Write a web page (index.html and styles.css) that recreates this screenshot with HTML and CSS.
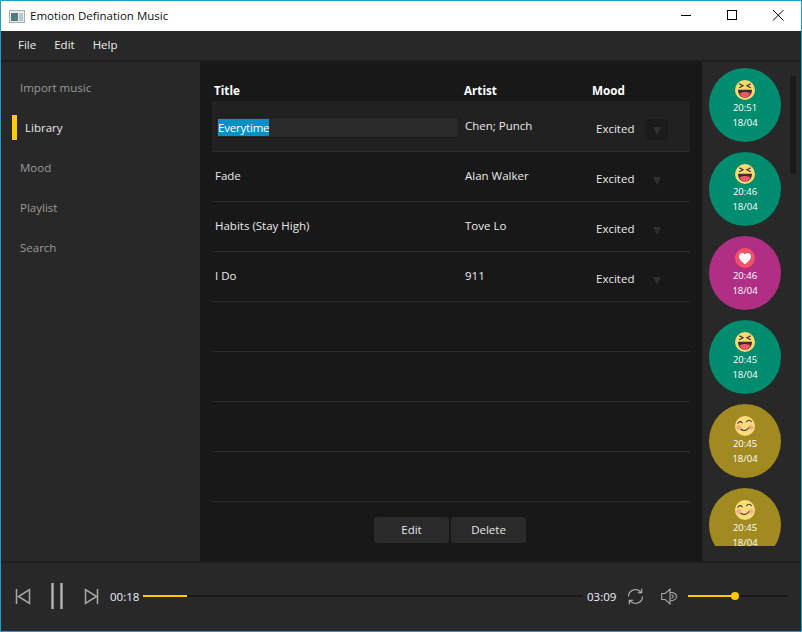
FILE: index.html
```html
<!DOCTYPE html>
<html lang="en">
<head>
<meta charset="utf-8">
<title>Emotion Defination Music</title>
<link rel="stylesheet" href="styles.css">
</head>
<body>
<svg class="defs" width="0" height="0" aria-hidden="true">
  <defs>
    <symbol id="laugh" viewBox="0 0 20 20">
      <circle cx="10" cy="10" r="10" fill="#fbd971"/>
      <path d="M3 9.800h14c0 4.800-3.100 8-7 8s-7-3.200-7-8z" fill="#3a2f2f"/>
      <path d="M4.600 13.600c1.500-1 3.400-1.500 5.400-1.500s3.900.5 5.400 1.500c-1.200 2.700-3.100 4.100-5.400 4.100s-4.200-1.400-5.400-4.100z" fill="#f0556c"/>
      <path d="M4.300 3.800l3.700 2-3.700 2M15.700 3.800l-3.700 2 3.700 2" fill="none" stroke="#3a3030" stroke-width="1.200"/>
    </symbol>
    <symbol id="love" viewBox="0 0 20 20">
      <circle cx="10" cy="10" r="10" fill="#f25268"/>
      <path d="M10 16.200C6.500 13.500 4 11.300 4 8.500 4 6.500 5.500 5 7.300 5c1.200 0 2.200.6 2.700 1.600C10.500 5.600 11.500 5 12.700 5 14.500 5 16 6.500 16 8.500c0 2.800-2.500 5-6 7.700z" fill="#fff"/>
    </symbol>
    <symbol id="smile" viewBox="0 0 20 20">
      <circle cx="10" cy="10" r="10" fill="#fbdc7c"/>
      <circle cx="3.800" cy="11.400" r="2.400" fill="#f6a98f"/>
      <circle cx="16" cy="11.400" r="2.400" fill="#f6a98f"/>
      <path d="M2.800 7.400C3.600 5.300 6 5 7.200 6.800M11.600 5.800c1-1.900 3.500-2 4.700-.2M5.800 13.300c2.600 2 6 1.400 8-1.600" fill="none" stroke="#4a3a28" stroke-width="1.100" stroke-linecap="round"/>
    </symbol>
  </defs>
</svg>
<div class="window">
  <header class="titlebar">
    <svg class="app-icon" width="16" height="13" viewBox="0 0 16 13">
      <rect x=".5" y=".5" width="15" height="12" fill="#e8ecec" stroke="#a9b0b0"/>
      <rect x="2" y="3" width="7" height="8" fill="#4f7f78"/>
      <rect x="10" y="3" width="4" height="8" fill="#b9c9c9"/>
    </svg>
    <span class="app-title">Emotion Defination Music</span>
    <div class="win-controls">
      <svg class="win-btn" width="46" height="30" viewBox="0 0 46 30"><path d="M18 14.500h10" stroke="#000"/></svg>
      <svg class="win-btn" width="46" height="30" viewBox="0 0 46 30"><rect x="18.500" y="9.500" width="9" height="9" fill="none" stroke="#000"/></svg>
      <svg class="win-btn" width="46" height="30" viewBox="0 0 46 30"><path d="M18 9l10.500 10.500M28.500 9L18 19.500" stroke="#000" stroke-width="1"/></svg>
    </div>
  </header>

  <nav class="menubar">
    <span>File</span><span>Edit</span><span>Help</span>
  </nav>

  <div class="content">
    <aside class="sidebar">
      <div class="nav-item">Import music</div>
      <div class="nav-item active">Library</div>
      <div class="nav-item">Mood</div>
      <div class="nav-item">Playlist</div>
      <div class="nav-item">Search</div>
    </aside>

    <main class="library">
      <div class="thead">
        <span>Title</span><span>Artist</span><span>Mood</span>
      </div>
      <div class="row selected">
        <div class="cell title"><div class="edit"><span class="sel">Everytime</span></div></div>
        <div class="cell artist">Chen; Punch</div>
        <div class="cell mood"><span class="mood-text">Excited</span><span class="drop"><i class="arrow"></i></span></div>
      </div>
      <div class="row">
        <div class="cell title">Fade</div>
        <div class="cell artist">Alan Walker</div>
        <div class="cell mood"><span class="mood-text">Excited</span><span class="drop plain"><i class="arrow"></i></span></div>
      </div>
      <div class="row">
        <div class="cell title">Habits (Stay High)</div>
        <div class="cell artist">Tove Lo</div>
        <div class="cell mood"><span class="mood-text">Excited</span><span class="drop plain"><i class="arrow"></i></span></div>
      </div>
      <div class="row">
        <div class="cell title">I Do</div>
        <div class="cell artist">911</div>
        <div class="cell mood"><span class="mood-text">Excited</span><span class="drop plain"><i class="arrow"></i></span></div>
      </div>
      <div class="row"></div>
      <div class="row"></div>
      <div class="row"></div>
      <div class="row"></div>
      <div class="actions">
        <button class="btn">Edit</button>
        <button class="btn">Delete</button>
      </div>
    </main>

    <aside class="history">
      <div class="bubbles">
        <div class="bubble green"><svg class="emo"><use href="#laugh"/></svg><span>20:51</span><span>18/04</span></div>
        <div class="bubble green"><svg class="emo"><use href="#laugh"/></svg><span>20:46</span><span>18/04</span></div>
        <div class="bubble pink"><svg class="emo"><use href="#love"/></svg><span>20:46</span><span>18/04</span></div>
        <div class="bubble green"><svg class="emo"><use href="#laugh"/></svg><span>20:45</span><span>18/04</span></div>
        <div class="bubble gold"><svg class="emo"><use href="#smile"/></svg><span>20:45</span><span>18/04</span></div>
        <div class="bubble gold"><svg class="emo"><use href="#smile"/></svg><span>20:45</span><span>18/04</span></div>
      </div>
      <div class="scrollbar"></div>
    </aside>
  </div>

  <footer class="player">
    <svg class="ico prev" width="16" height="17" viewBox="0 0 16 17"><path d="M1.500 1v15M14.500 1.500v14L3.500 8.500z" fill="none" stroke="#a8a8a8" stroke-width="1.500"/></svg>
    <svg class="ico pause" width="14" height="26" viewBox="0 0 14 26"><path d="M2.500 0v26M11.500 0v26" stroke="#b4b4b4" stroke-width="2.400"/></svg>
    <svg class="ico next" width="16" height="17" viewBox="0 0 16 17"><path d="M13.500 1v15M1.500 1.500v14l11-7z" fill="none" stroke="#a8a8a8" stroke-width="1.500"/></svg>
    <span class="time cur">00:18</span>
    <div class="track seek"><div class="fill seek-fill"></div></div>
    <span class="time end">03:09</span>
    <svg class="ico repeat" width="17" height="17" viewBox="0 0 17 17"><path d="M1.500 8.500A7 7 0 0 1 14 4.300M15.500 8.500A7 7 0 0 1 3 12.700M14.700 .8v3.900h-3.900M2.300 16.200v-3.900h3.900" fill="none" stroke="#b8b8b8" stroke-width="1.100"/></svg>
    <svg class="ico speaker" width="17" height="17" viewBox="0 0 17 17"><path d="M.7 5.500h3.500L9 1v15l-4.800-4.500H.7zM9 4.200c4 0 6.500 2 6.500 4.300S13 12.800 9 12.800M10.500 6.800c1.200.4 1.800 1 1.800 1.700s-.6 1.300-1.800 1.700" fill="none" stroke="#a8a8a8" stroke-width="1.100"/></svg>
    <div class="track volume"><div class="fill vol-fill"><i class="thumb"></i></div></div>
  </footer>
</div>
</body>
</html>
```
FILE: styles.css
```css
* { box-sizing: border-box; }
html, body { margin: 0; padding: 0; height: 100%; overflow: hidden; }
body { font-family: "Open Sans", "Noto Sans", sans-serif; font-size: 11.5px; color: #fff; }
.defs { position: absolute; }

.window {
  width: 802px; height: 632px;
  display: flex; flex-direction: column;
  border: 1px solid #1ba1c6;
  background: #1e1e1e;
}

.titlebar {
  height: 30px; flex: none;
  display: flex; align-items: center;
  background: #fff; color: #111;
  padding-left: 8px;
}
.app-icon { flex: none; margin-right: 5px; }
.app-title { font-size: 11.5px; margin-top: -1px; }
.win-controls { margin-left: auto; display: flex; }
.win-btn { display: block; }

.menubar {
  height: 29px; flex: none;
  display: flex; align-items: center; gap: 18px;
  background: #282828; color: #eee;
  padding: 0 0 3px 17px; font-size: 11.5px;
}

.content { flex: 1; min-height: 0; display: flex; padding: 2px 0 2px 1px; background: #1e1e1e; }

.sidebar { width: 198px; flex: none; background: #282828; padding-top: 5px; }
.nav-item {
  height: 40px; display: flex; align-items: center;
  padding-left: 18px; color: #9a9a9a; font-size: 11.5px;
}
.nav-item.active { color: #e8e8e8; padding-left: 13px; }
.nav-item.active::before {
  content: ""; width: 5px; height: 25px; background: #ffcc00; margin: 1px 8px 0 -3px; flex: none;
}

.library { width: 502px; flex: none; background: #181818; padding: 0 12px; display: flex; flex-direction: column; }
.thead {
  height: 39px; flex: none; display: grid; grid-template-columns: 250px 128px 1fr;
  align-items: end; font-weight: 700; font-size: 11.7px; padding-left: 2px;
  line-height: 17px; padding-bottom: 2px;
}
.row {
  height: 50px; flex: none;
  display: grid; grid-template-columns: 250px 128px 1fr;
  border-bottom: 1px solid #2b2b2b;
}
.row.selected { background: #212121; height: 51px; border-top: 1px solid #1f1f1f; }
.cell { display: flex; align-items: center; padding-left: 3px; padding-bottom: 3px; color: #eaeaea; font-size: 11.5px; }
.row.selected .artist { padding-bottom: 2px; }
.cell.mood { padding: 3px 0 0 6px; }
.edit {
  width: 243px; height: 21px; margin: 4px 0 0 1px;
  background: #2a2a2a; border: 1px solid #1c1c1c;
  padding: 1px; display: flex;
}
.sel { background: #0a8fc4; color: #fff; line-height: 17px; height: 17px; width: 51px; white-space: nowrap; letter-spacing: -.2px; }
.mood-text { width: 49px; }
.drop {
  width: 23px; height: 21px; border-radius: 3px; background: #1b1b1b; margin-top: 2px;
  display: flex; align-items: center; justify-content: center;
}
.drop.plain { background: transparent; }
.arrow {
  width: 0; height: 0; margin-top: 3px;
  border-left: 4px solid transparent; border-right: 4px solid transparent;
  border-top: 8px solid #2f2f2f;
}

.actions { flex: 1; display: flex; justify-content: center; gap: 2px; padding: 15px 2px 0 0; }
.btn {
  width: 75px; height: 26px; border: 0; border-radius: 3px;
  background: #2a2a2a; color: #e6e6e6;
  font: 11.5px "Open Sans", "Noto Sans", sans-serif; padding: 0 0 2px;
}

.history { flex: 1; min-width: 0; background: #282828; position: relative; overflow: hidden; }
.bubbles { height: 484px; overflow: hidden; padding: 6px 0 0 7px; display: flex; flex-direction: column; gap: 10px; }
.bubble {
  width: 72px; height: 74px; flex: none; border-radius: 50%;
  display: flex; flex-direction: column; align-items: center;
  padding-top: 12px; color: #fff; font-size: 9.5px; line-height: 15px;
}
.bubble span { height: 15px; }
.green { background: #008c6e; }
.pink { background: #b02f84; }
.gold { background: #a18a1f; }
.emo { width: 20px; height: 20px; display: block; flex: none; }
.scrollbar {
  position: absolute; top: 14px; left: 88px;
  width: 6px; height: 98px; border-radius: 3px; background: #1a1a1a;
}

.player {
  height: 68px; flex: none; background: #282828;
  display: flex; align-items: center; position: relative;
  padding: 0 0 2px 14px;
}
.ico { flex: none; display: block; }
.pause { margin-left: 19px; }
.next { margin-left: 20px; }
.time { color: #eef; font-size: 11.5px; flex: none; }
.cur { margin-left: 10px; width: 33px; }
.track { height: 2px; background: #191919; flex: none; }
.seek { width: 440px; }
.fill { height: 2px; background: #ffcc00; position: relative; }
.seek-fill { width: 44px; }
.end { margin-left: 4px; width: 40px; }
.speaker { margin-left: 17px; }
.volume { width: 100px; margin-left: 10px; }
.vol-fill { width: 47px; }
.thumb {
  position: absolute; right: -4px; top: -3px;
  width: 8px; height: 8px; border-radius: 50%; background: #ffcc00;
}
```
